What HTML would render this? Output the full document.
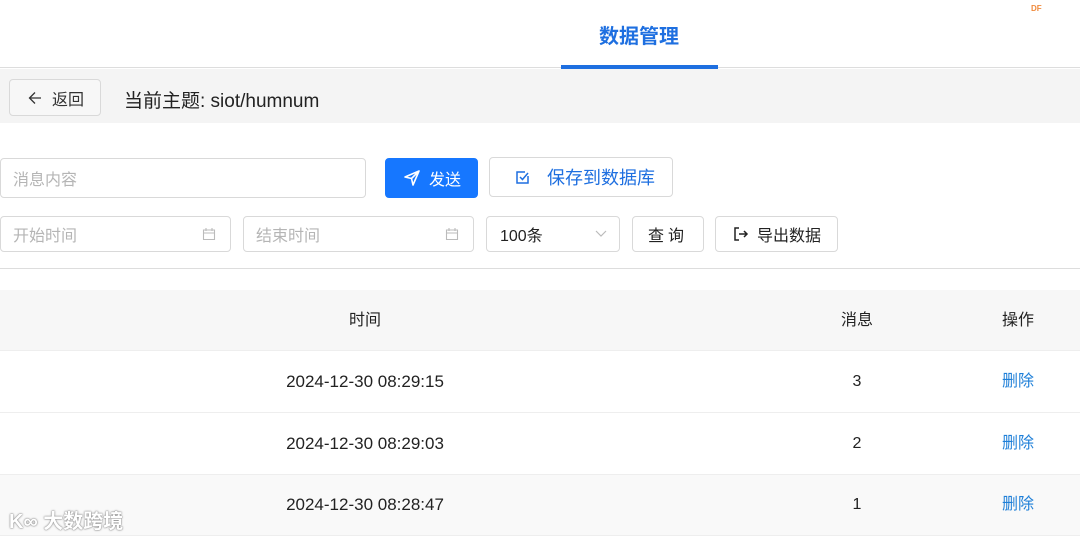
<!DOCTYPE html>
<html><head><meta charset="utf-8"><style>
*{box-sizing:border-box;margin:0;padding:0}
body{width:1080px;height:538px;overflow:hidden;background:#fff;font-family:"Liberation Sans","Noto Sans CJK SC",sans-serif;color:#222;position:relative}
.a{position:absolute}
.box{position:absolute;border:1px solid #d9d9d9;border-radius:4px;background:#fff;display:flex;align-items:center;font-size:16px}
.ph{color:#b5b5b5}
.td{position:absolute;font-size:16px;transform:translateX(-50%);line-height:20px;height:20px;white-space:nowrap}
.t{font-size:17px}
</style></head><body>
<div class="a" style="left:0;top:0;width:1080px;height:68px;border-bottom:1px solid #ddd"></div>
<div class="a" style="left:599px;top:20px;font-size:20px;font-weight:bold;color:#1e6fe0">数据管理</div>
<div class="a" style="left:561px;top:65px;width:157px;height:4px;background:#1e6fe0"></div>
<div class="a" style="left:1031px;top:4px;font-size:8px;font-weight:bold;color:#f08a3c">DF</div>
<div class="a" style="left:0;top:69px;width:1080px;height:54px;background:#f4f4f4"></div>
<div class="box" style="left:9px;top:79px;width:92px;height:37px;background:#f7f7f7;padding-left:18px;color:#333">
<svg width="14" height="14" viewBox="0 0 14 14" style="margin-right:10px"><path d="M13 7 H1.5 M7 1.5 L1.5 7 L7 12.5" fill="none" stroke="#333" stroke-width="1.3"/></svg>返回</div>
<div class="a" style="left:124px;top:86px;font-size:19px;color:#222">当前主题: siot/humnum</div>

<div class="box ph" style="left:0;top:158px;width:366px;height:40px;padding-left:12px">消息内容</div>
<div class="box" style="left:385px;top:158px;width:93px;height:40px;background:#1677ff;border-color:#1677ff;color:#fff;padding-left:17px">
<svg width="18" height="18" viewBox="0 0 18 18" style="margin-right:8px"><path d="M2 8 L16 2 L10 16 L8.5 9.5 Z M8.5 9.5 L16 2" fill="none" stroke="#fff" stroke-width="1.6" stroke-linejoin="round"/></svg>发送</div>
<div class="box" style="left:489px;top:157px;width:184px;height:40px;color:#1e6fe0;font-size:18px;padding-left:25px">
<svg width="16" height="16" viewBox="0 0 16 16" style="margin-right:16px"><path d="M13 7 V14 H2 V3 H10" fill="none" stroke="#1e6fe0" stroke-width="1.5"/><path d="M5 8 L7.5 10.5 L13 4" fill="none" stroke="#1e6fe0" stroke-width="1.5"/></svg>保存到数据库</div>

<div class="box ph" style="left:0;top:216px;width:231px;height:36px;padding-left:12px;justify-content:space-between;padding-right:14px">开始时间<svg width="14" height="14" viewBox="0 0 14 14"><path d="M1.5 3 H12.5 V12.5 H1.5 Z M1.5 6 H12.5 M4 1 V4 M10 1 V4" fill="none" stroke="#bbb" stroke-width="1.1"/></svg></div>
<div class="box ph" style="left:243px;top:216px;width:231px;height:36px;padding-left:12px;justify-content:space-between;padding-right:14px">结束时间<svg width="14" height="14" viewBox="0 0 14 14"><path d="M1.5 3 H12.5 V12.5 H1.5 Z M1.5 6 H12.5 M4 1 V4 M10 1 V4" fill="none" stroke="#bbb" stroke-width="1.1"/></svg></div>
<div class="box" style="left:486px;top:216px;width:134px;height:36px;padding-left:13px;justify-content:space-between;padding-right:12px">100条<svg width="12" height="8" viewBox="0 0 12 8"><path d="M1 1 L6 6 L11 1" fill="none" stroke="#bbb" stroke-width="1.2"/></svg></div>
<div class="box" style="left:632px;top:216px;width:72px;height:36px;justify-content:center;letter-spacing:4px">查询</div>
<div class="box" style="left:715px;top:216px;width:123px;height:36px;padding-left:17px;font-size:16px">
<svg width="16" height="16" viewBox="0 0 16 16" style="margin-right:8px"><path d="M6 2 H2 V14 H6 M6 8 H14 M11 5 L14 8 L11 11" fill="none" stroke="#222" stroke-width="1.5"/></svg>导出数据</div>

<div class="a" style="left:0;top:268px;width:1080px;height:1px;background:#ddd"></div>
<div class="a" style="left:0;top:290px;width:1080px;height:61px;background:#f7f7f7;border-bottom:1px solid #eee"></div>
<div class="td" style="left:365px;top:311px">时间</div>
<div class="td" style="left:857px;top:311px">消息</div>
<div class="td" style="left:1018px;top:311px">操作</div>

<div class="a" style="left:0;top:412px;width:1080px;height:1px;background:#eee"></div>
<div class="a" style="left:0;top:474px;width:1080px;height:62px;background:#f9f9f9;border-top:1px solid #eee;border-bottom:1px solid #eee"></div>

<div class="td t" style="left:365px;top:372px">2024-12-30 08:29:15</div>
<div class="td" style="left:857px;top:372px">3</div>
<div class="td" style="left:1018px;top:372px;color:#1e7fd8">删除</div>
<div class="td t" style="left:365px;top:434px">2024-12-30 08:29:03</div>
<div class="td" style="left:857px;top:434px">2</div>
<div class="td" style="left:1018px;top:434px;color:#1e7fd8">删除</div>
<div class="td t" style="left:365px;top:495px">2024-12-30 08:28:47</div>
<div class="td" style="left:857px;top:495px">1</div>
<div class="td" style="left:1018px;top:495px;color:#1e7fd8">删除</div>

<div class="a" style="left:9px;top:505px;font-size:20px;color:#fff;text-shadow:0 0 2px #888,0 0 1px #666;font-weight:bold">K∞ 大数跨境</div>
</body></html>
